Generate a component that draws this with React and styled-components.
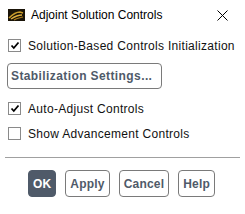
import React from 'react';
import styled, { createGlobalStyle } from 'styled-components';

const GlobalStyle = createGlobalStyle`
  html, body { margin: 0; padding: 0; background: #fff; }
  body { font-family: "Liberation Sans", Arial, sans-serif; }
`;

const Window = styled.div`
  width: 245px;
  height: 214px;
  background: #fff;
  display: flex;
  flex-direction: column;
  box-sizing: border-box;
`;

const TitleBar = styled.div`
  height: 30px;
  display: flex;
  align-items: center;
  padding: 0 0 0 8px;
  font-size: 12px;
  color: #000;
`;

const TitleText = styled.span`
  margin-left: 6px;
  flex: 1;
`;

const Close = styled.div`
  width: 46px;
  display: flex;
  justify-content: center;
  align-items: center;
`;

const Body = styled.div`
  display: flex;
  flex-direction: column;
  padding: 9px 0 0 8px;
`;

const CheckRow = styled.label`
  display: flex;
  align-items: center;
  height: 13px;
  margin-bottom: ${p => p.$gap}px;
  font-size: 12px;
  letter-spacing: 0.3px;
  color: #111;
`;

const Box = styled.span`
  width: 11px;
  height: 11px;
  border: 1px solid #8a8a8a;
  background: #fff;
  display: flex;
  align-items: center;
  justify-content: center;
  margin-right: 7px;
  flex-shrink: 0;
`;

const WideButton = styled.div`
  align-self: flex-start;
  margin-left: -1px;
  height: 24px;
  width: 147px;
  padding: 0 3px;
  border: 1px solid #7a7a7a;
  border-radius: 4px;
  display: flex;
  align-items: center;
  font-weight: bold;
  font-size: 12px;
  letter-spacing: 0.4px;
  color: #4f5a69;
  margin-bottom: 13px;
`;

const Separator = styled.div`
  margin: 17px 5px 0 5px;
  height: 1px;
  background: #a0a0a0;
`;

const ButtonRow = styled.div`
  display: flex;
  justify-content: center;
  gap: 9px;
  margin-top: 12px;
  padding-right: 2px;
`;

const Button = styled.div`
  height: 25px;
  padding: 0 ${p => p.$pad}px;
  border: 1px solid ${p => (p.$primary ? '#4f5a69' : '#7a7a7a')};
  background: ${p => (p.$primary ? '#4f5a69' : '#fff')};
  color: ${p => (p.$primary ? '#fff' : '#4f5a69')};
  border-radius: 4px;
  display: flex;
  align-items: center;
  font-weight: bold;
  font-size: 12px;
  letter-spacing: 0.2px;
`;

const Check = () => (
  <svg width="10" height="9" viewBox="0 0 10 9">
    <path d="M1.5 4.5 L3.8 7 L8.5 1.5" fill="none" stroke="#000" strokeWidth="1.8" />
  </svg>
);

const Logo = () => (
  <svg width="17" height="12" viewBox="0 0 17 12">
    <rect width="17" height="12" fill="#1a1408" />
    <path d="M1 9 C4 6, 7 3, 12 3 L15 4" fill="none" stroke="#c89b2a" strokeWidth="1.6" />
    <path d="M3 10 C6 8, 9 6, 14 6" fill="none" stroke="#e0b040" strokeWidth="1.4" />
    <path d="M6 11 C9 9, 12 9, 15 8" fill="none" stroke="#a87a1c" strokeWidth="1.2" />
  </svg>
);

export default function App() {
  return (
    <>
      <GlobalStyle />
      <Window>
        <TitleBar>
          <Logo />
          <TitleText>Adjoint Solution Controls</TitleText>
          <Close>
            <svg width="11" height="11" viewBox="0 0 11 11">
              <path d="M0.5 0.5 L10.5 10.5 M10.5 0.5 L0.5 10.5" stroke="#000" strokeWidth="1" />
            </svg>
          </Close>
        </TitleBar>
        <Body>
          <CheckRow $gap={11}>
            <Box><Check /></Box>
            Solution-Based Controls Initialization
          </CheckRow>
          <WideButton>Stabilization Settings...</WideButton>
          <CheckRow $gap={12}>
            <Box><Check /></Box>
            Auto-Adjust Controls
          </CheckRow>
          <CheckRow $gap={0}>
            <Box />
            Show Advancement Controls
          </CheckRow>
        </Body>
        <Separator />
        <ButtonRow>
          <Button $primary $pad={4}>OK</Button>
          <Button $pad={4}>Apply</Button>
          <Button $pad={4}>Cancel</Button>
          <Button $pad={4}>Help</Button>
        </ButtonRow>
      </Window>
    </>
  );
}
